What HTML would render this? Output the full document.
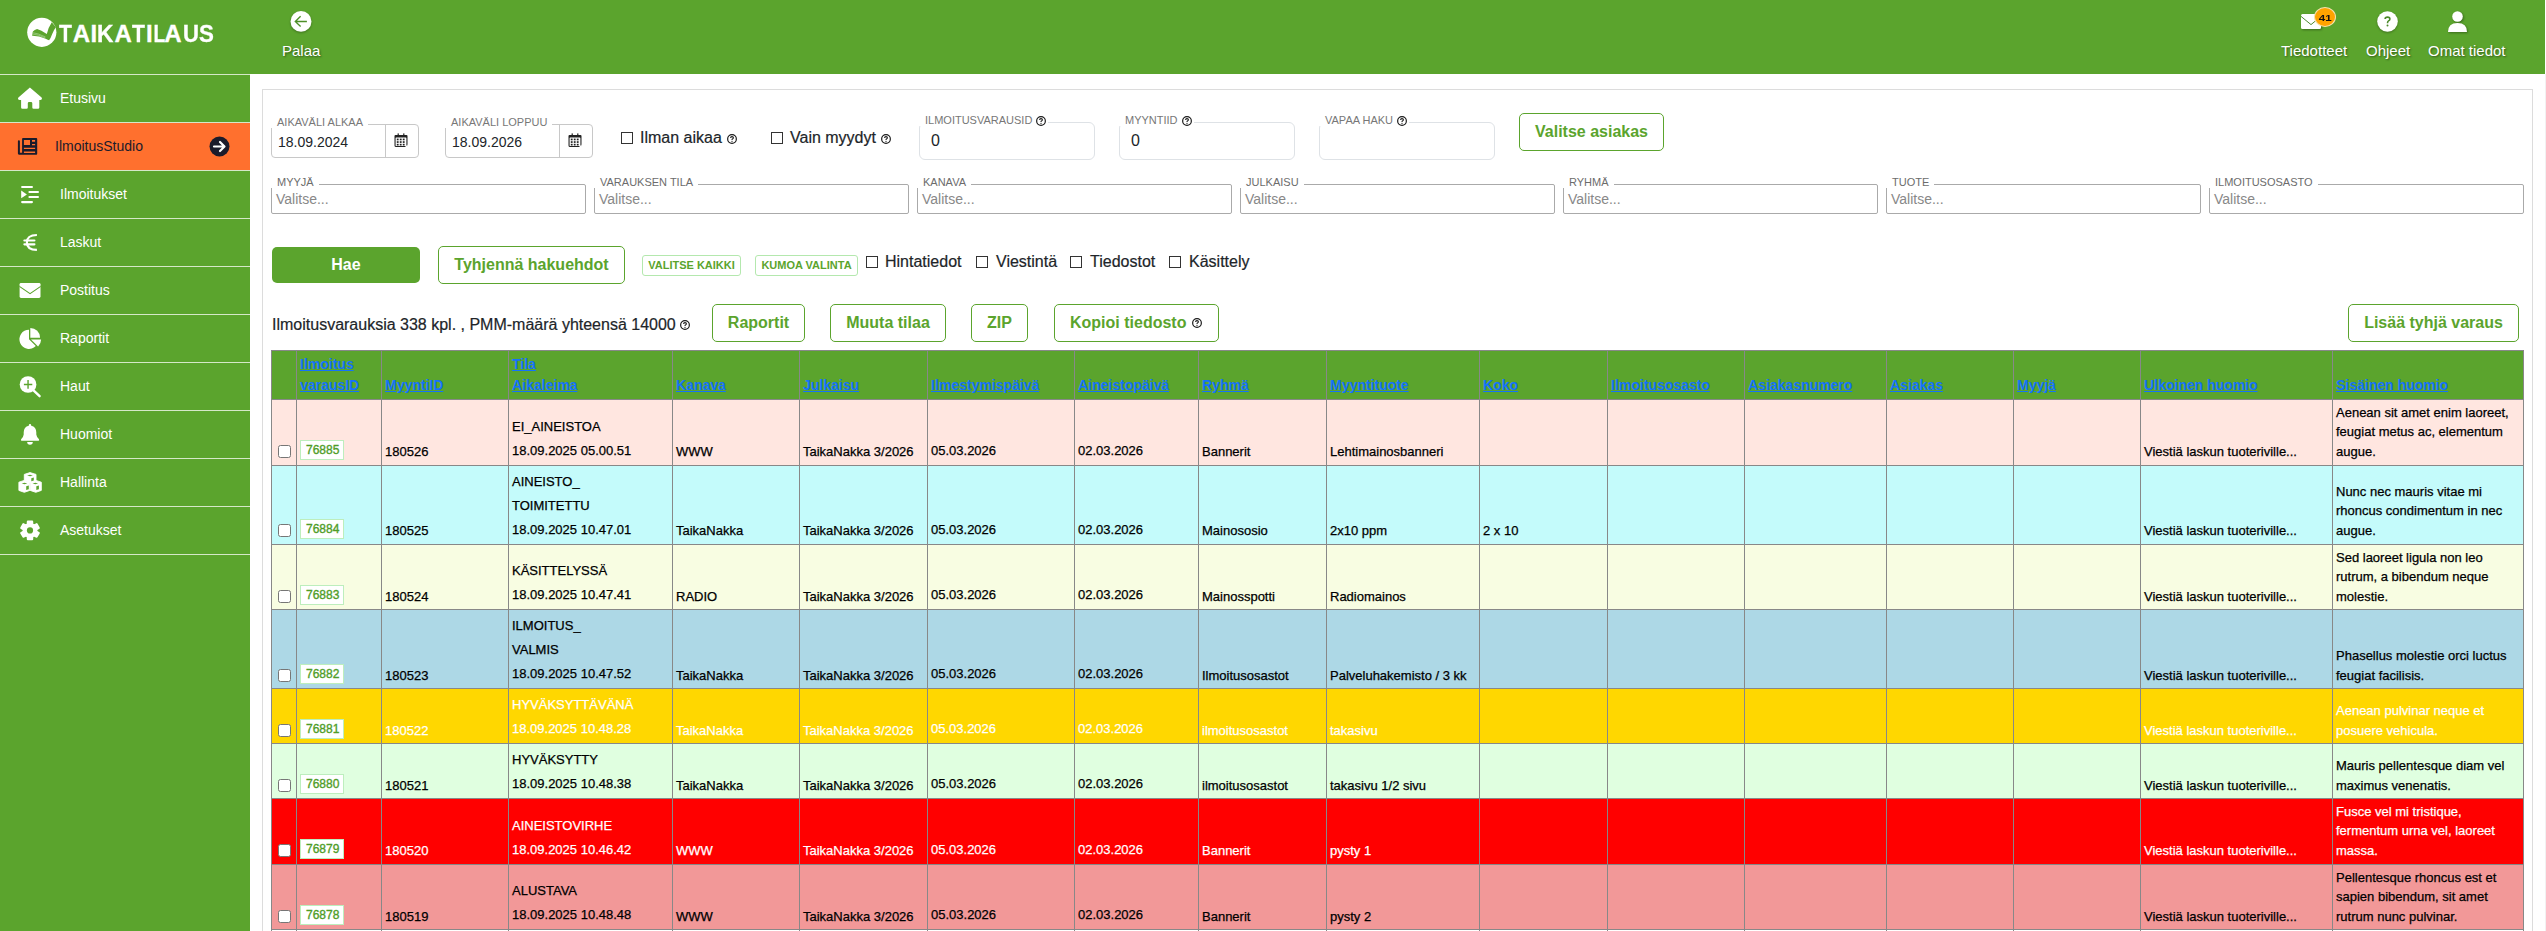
<!DOCTYPE html>
<html><head><meta charset="utf-8">
<style>
*{box-sizing:border-box}
html,body{margin:0;padding:0;width:2546px;height:931px;overflow:hidden;background:#fff;font-family:"Liberation Sans",sans-serif;color:#212529}
.abs{position:absolute}
#hdr{position:absolute;left:0;top:0;width:2545px;height:74px;background:#5ba42d}
.htxt{position:absolute;color:#fff;font-size:15px;line-height:17px;text-shadow:1px 1px 2px rgba(0,0,0,.45);white-space:nowrap}
#side{position:absolute;left:0;top:74px;width:250px;height:857px;background:#5ba42d}
.si{position:absolute;left:0;width:250px;height:48px;border-top:1px solid #d5e8c8}
.si .t{position:absolute;left:60px;top:15px;font-size:14px;line-height:16px;color:#fff;white-space:nowrap}
.si svg{position:absolute}
#panel{position:absolute;left:262px;top:89px;width:2271px;height:900px;border:1px solid #dcdcdc}
.lg{position:absolute;font-size:11px;line-height:12px;color:#777;white-space:nowrap;background:#fff;padding:0 5px 0 6px}
.fs{position:absolute;border:1px solid #c8c8c8;border-radius:4px}
.fs2{position:absolute;border:1px solid #dee2e6;border-radius:6px}
.sel{position:absolute;border:1px solid #aaa;border-radius:2px}
.ph{position:absolute;font-size:14px;color:#888;white-space:nowrap;line-height:16px}
.cb{position:absolute;width:12px;height:12px;border:1px solid #333;background:#fff}
.ct{position:absolute;font-size:16px;line-height:18px;color:#212529;white-space:nowrap;-webkit-text-stroke:0.2px currentColor}
.help{position:absolute;width:10px;height:10px;border:1.3px solid #222;border-radius:50%;font-size:8px;line-height:8px;text-align:center;font-weight:bold;color:#222}
.btn{position:absolute;border:1px solid #5ba42d;border-radius:5px;color:#5ba42d;font-weight:bold;font-size:16px;text-align:center;white-space:nowrap;background:#fff}
.sbtn{position:absolute;border:1px solid #b4e8ae;border-radius:3px;color:#5ba42d;font-weight:bold;font-size:11px;text-align:center;white-space:nowrap;background:#fff}
.th{position:absolute;font-size:14px;line-height:16px;font-weight:bold;color:#1572fb;text-decoration:underline;white-space:nowrap}
.td{position:absolute;font-size:13px;line-height:15px;white-space:nowrap;-webkit-text-stroke:0.25px currentColor}
.tcb{position:absolute;width:13px;height:13px;border:1px solid #767676;border-radius:2.5px;background:#fff}
.badge{position:absolute;width:44px;height:20px;border:1px solid #bdeebd;background:#fff;color:#4f9d28;font-weight:normal;-webkit-text-stroke:0.35px #4f9d28;font-size:12px;line-height:15px;padding:2px 0 0 5px}
</style></head><body>
<div id="hdr">
<svg class="abs" style="left:27px;top:17px" width="30" height="30" viewBox="0 0 30 30"><circle cx="14.8" cy="15.3" r="14.6" fill="#fff"/><path d="M5.9 14.4 Q7.5 12.8 10.1 12.1 Q14 13.3 19.8 17.1 Q21 11 24.8 5.3 L28.9 10.3 Q26.8 13 25.2 17 Q23.8 21 22.1 23.3 Q21 22.8 18.7 21.7 Q12 18.6 5.1 18.7 Z" fill="#5ba42d"/><path d="M5.3 15.6 Q11 16.2 18.5 20 M5.3 17 Q11 17.4 18 20.8" stroke="#b5dca0" stroke-width="0.6" fill="none"/></svg>
<div class="abs" style="left:0;top:20px;font-size:24px;line-height:28px;font-weight:bold;color:#fff;-webkit-text-stroke:0.3px #fff"><span style="position:absolute;left:58.9px;top:0;transform:scaleX(0.88);transform-origin:0px 0">T</span><span style="position:absolute;left:72.8px;top:0">A</span><span style="position:absolute;left:90.4px;top:0">I</span><span style="position:absolute;left:97.3px;top:0;transform:scaleX(0.95);transform-origin:2px 0">K</span><span style="position:absolute;left:114.5px;top:0">A</span><span style="position:absolute;left:132.3px;top:0;transform:scaleX(0.88);transform-origin:0px 0">T</span><span style="position:absolute;left:145.9px;top:0">I</span><span style="position:absolute;left:152.9px;top:0;transform:scaleX(0.8);transform-origin:2px 0">L</span><span style="position:absolute;left:164.3px;top:0">A</span><span style="position:absolute;left:182.8px;top:0;transform:scaleX(0.92);transform-origin:1px 0">U</span><span style="position:absolute;left:198.9px;top:0;transform:scaleX(0.93);transform-origin:1px 0">S</span></div>
<svg class="abs" style="left:290px;top:10px;filter:drop-shadow(0.5px 1px 1px rgba(0,0,0,.3))" width="23" height="24" viewBox="0 0 23 24"><circle cx="11" cy="11.4" r="10.45" fill="#fff"/><path d="M16.9 11.5 H5.4 M10.6 6.2 L5.3 11.5 L10.6 16.6" stroke="#4d8f27" stroke-width="1.35" fill="none"/></svg>
<div class="htxt" style="left:282px;top:42px">Palaa</div>
<svg class="abs" style="left:2300px;top:13px;filter:drop-shadow(1px 1px 1px rgba(0,0,0,.35))" width="22" height="17" viewBox="0 0 22 17">
<rect x="1" y="1" width="20" height="15" rx="1.5" fill="#fff"/>
<path d="M1 3.4 L11 11.6 L21 3.4" stroke="#4f8a30" stroke-width="1" fill="none"/>
</svg>
<div class="abs" style="left:2314px;top:7px;width:22px;height:20px;border-radius:50%;background:#ffa300;border:1px solid #f4e2b0;font-size:9.5px;line-height:20px;font-weight:bold;color:#111;text-align:center"><span style="display:inline-block;transform:scaleX(1.22)">41</span></div>
<div class="htxt" style="left:2281px;top:42px">Tiedotteet</div>
<svg class="abs" style="left:2376px;top:11px;filter:drop-shadow(0.5px 1px 1px rgba(0,0,0,.3))" width="23" height="23" viewBox="0 0 23 23"><circle cx="11.5" cy="10.5" r="10.3" fill="#fff"/><path d="M9.1 8.1 Q9.1 6.1 11.5 6.1 Q13.9 6.1 13.9 7.9 Q13.9 9.1 12.5 9.9 Q11.5 10.5 11.5 12.2" stroke="#4b8a2a" stroke-width="1.6" fill="none"/><circle cx="11.5" cy="14.6" r="1" fill="#4b8a2a"/></svg>
<div class="htxt" style="left:2366px;top:42px">Ohjeet</div>
<svg class="abs" style="left:2447px;top:11px;filter:drop-shadow(1px 1px 1px rgba(0,0,0,.35))" width="21" height="22" viewBox="0 0 21 22">
<circle cx="10.5" cy="5.5" r="5.3" fill="#fff"/>
<path d="M1 21 Q1 12 10.5 12 Q20 12 20 21 Z" fill="#fff"/>
</svg>
<div class="htxt" style="left:2428px;top:42px">Omat tiedot</div>
</div>
<div id="side">
<div class="si" style="top:0px"><svg style="position:absolute;left:14px;top:9px" width="32" height="28" viewBox="0 0 32 28"><path fill="#fff" d="M15.9 3.6 L27.6 13.6 Q28.4 14.5 27.6 15.6 Q27.2 16 26.3 16 H25.3 V23.4 Q25.3 24.7 24 24.7 H19.6 Q18.3 24.7 18.3 23.4 V19.3 Q18.3 18 17 18 H15.1 Q13.8 18 13.8 19.3 V23.4 Q13.8 24.7 12.5 24.7 H8.4 Q7.1 24.7 7.1 23.4 V16 H5.6 Q4.7 16 4.3 15.6 Q3.6 14.5 4.4 13.6 Z"/></svg><div class="t" style="">Etusivu</div></div>
<div class="si" style="top:48px;background:#ff702e"><svg style="position:absolute;left:14px;top:11px" width="28" height="26" viewBox="0 0 28 26"><path fill-rule="evenodd" fill="#1b1b2b" d="M9 4 H22.3 Q23.2 4 23.2 4.9 V19.8 Q23.2 20.7 22.3 20.7 H5 Q3.9 20.7 3.9 19.6 V7.2 Q3.9 6.3 4.9 6.3 Q5.9 6.3 5.9 7.2 V18.8 H8.1 V4.9 Q8.1 4 9 4 Z M9.9 6 H16 V11 H9.9 Z M18 6 H21.1 V7.7 H18 Z M18 9.9 H21.1 V11.2 H18 Z M9.9 13.8 H21.1 V15 H9.9 Z M9.9 17.5 H21.1 V19 H9.9 Z"/></svg><div class="t" style="color:#1b1b2b;left:55px">IlmoitusStudio</div><svg style="position:absolute;left:209px;top:13px" width="21" height="21" viewBox="0 0 21 21"><circle cx="10.5" cy="10.5" r="10" fill="#1b1b2b"/><path d="M5 10.5 H15 M11 6 L15.5 10.5 L11 15" stroke="#fff" stroke-width="2.2" fill="none" stroke-linecap="round" stroke-linejoin="round"/></svg></div>
<div class="si" style="top:96px"><svg style="position:absolute;left:14px;top:9px" width="32" height="28" viewBox="0 0 32 28"><rect x="7.07" y="5.9" width="11.93" height="2.2" rx="1.1" fill="#fff"/><rect x="14.4" y="11" width="10.6" height="2.1" rx="1" fill="#fff"/><rect x="14.4" y="15.9" width="10.6" height="2.1" rx="1" fill="#fff"/><rect x="7.07" y="21" width="11.93" height="2.2" rx="1.1" fill="#fff"/><path d="M7.2 10.5 L12.9 14.4 L7.2 18.3 Z" fill="#fff"/></svg><div class="t" style="">Ilmoitukset</div></div>
<div class="si" style="top:144px"><svg style="position:absolute;left:14px;top:9px" width="32" height="28" viewBox="0 0 32 28"><path d="M22.9 7.0 C16.8 7.0 12.9 9.5 12.9 14.45 C12.9 19.4 16.8 21.9 22.9 21.9" stroke="#fff" stroke-width="2.15" fill="none"/><rect x="9.3" y="11.4" width="12.2" height="2.1" rx="1.05" fill="#fff"/><rect x="9.3" y="15.3" width="12.2" height="2.1" rx="1.05" fill="#fff"/></svg><div class="t" style="">Laskut</div></div>
<div class="si" style="top:192px"><svg style="position:absolute;left:14px;top:9px" width="32" height="28" viewBox="0 0 32 28"><rect x="5.6" y="6.9" width="20.9" height="15.1" rx="1.4" fill="#fff"/><path d="M5.4 10.4 L16.05 17.6 L26.7 10.4" stroke="#5ba42d" stroke-width="1.1" fill="none"/></svg><div class="t" style="">Postitus</div></div>
<div class="si" style="top:240px"><svg style="position:absolute;left:14px;top:9px" width="32" height="28" viewBox="0 0 32 28"><path d="M15 15.3 V5.7 A9.6 9.6 0 1 0 21.8 22.1 Z" fill="#fff"/><path d="M16.3 13.8 V4.0 A9.8 9.8 0 0 1 26.1 13.8 Z" fill="#fff"/><path d="M17 15.5 H27.1 A10.1 10.1 0 0 1 24.1 22.6 Z" fill="#fff"/></svg><div class="t" style="">Raportit</div></div>
<div class="si" style="top:288px"><svg style="position:absolute;left:14px;top:9px" width="32" height="28" viewBox="0 0 32 28"><path d="M19.5 18.3 L25.6 24.2" stroke="#fff" stroke-width="2.4" stroke-linecap="round"/><circle cx="14.05" cy="12.5" r="8.35" fill="#fff"/><path d="M9.9 12.5 H18.3 M14.05 8.1 V16.8" stroke="#5ba42d" stroke-width="1.4"/></svg><div class="t" style="">Haut</div></div>
<div class="si" style="top:336px"><svg style="position:absolute;left:14px;top:9px" width="32" height="28" viewBox="0 0 32 28"><path fill="#fff" d="M16 3.9 Q17.2 3.9 17.2 5.2 V5.8 Q22.3 7 22.3 12.5 V14.5 Q22.6 17 25 19.2 Q25.6 20.75 24.3 20.75 H7.9 Q6.5 20.75 7.1 19.2 Q9.5 17 9.7 14.5 V12.5 Q9.7 7 14.8 5.8 V5.2 Q14.8 3.9 16 3.9 Z"/><path fill="#fff" d="M13.2 22.1 H18.8 Q18.8 24.8 16 24.8 Q13.2 24.8 13.2 22.1 Z"/></svg><div class="t" style="">Huomiot</div></div>
<div class="si" style="top:384px"><svg style="position:absolute;left:14px;top:9px" width="32" height="28" viewBox="0 0 32 28"><g fill="#fff" stroke="#fff" stroke-width="0.9" stroke-linejoin="round"><path d="M16 4.6 L22 6.4 V12.4 L16 14.4 L10.3 12.4 V6.4 Z"/><path d="M10.3 12.4 L15.8 14.2 V22.4 L10.3 24.3 L4.9 22.4 V14.2 Z"/><path d="M21.8 12.4 L27.3 14.2 V22.4 L21.8 24.3 L16.2 22.4 V14.2 Z"/></g><g fill="#5ba42d"><path d="M13.1 7.5 L16 6.7 L18.9 7.5 L16 8.3 Z"/><path d="M17.3 10.3 L19.8 9.6 V12.6 L17.3 13.3 Z"/><path d="M7.7 15.5 L10.5 14.7 L13.3 15.5 L10.5 16.3 Z"/><path d="M12.2 18.2 L14.8 17.5 V21.2 L12.2 21.9 Z"/><path d="M18.5 15.5 L21.3 14.7 L24.1 15.5 L21.3 16.3 Z"/><path d="M22.3 18.2 L24.9 17.5 V21.2 L22.3 21.9 Z"/></g></svg><div class="t" style="">Hallinta</div></div>
<div class="si" style="top:432px"><svg style="position:absolute;left:14px;top:9px" width="32" height="28" viewBox="0 0 32 28"><path d="M13.53 8.33 L13.75 5.43 L18.25 5.43 L18.47 8.33 L20.06 9.25 L22.69 7.99 L24.94 11.89 L22.54 13.53 L22.54 15.37 L24.94 17.01 L22.69 20.91 L20.06 19.65 L18.47 20.57 L18.25 23.47 L13.75 23.47 L13.53 20.57 L11.94 19.65 L9.31 20.91 L7.06 17.01 L9.46 15.37 L9.46 13.53 L7.06 11.89 L9.31 7.99 L11.94 9.25 Z" fill="#fff" stroke="#fff" stroke-width="1.8" stroke-linejoin="round"/><circle cx="16" cy="14.45" r="3.1" fill="#5ba42d"/></svg><div class="t" style="">Asetukset</div></div>
<div class="si" style="top:480px;height:1px"></div>
</div>
<div id="panel"></div>
<div class="fs" style="left:271px;top:124px;width:148px;height:34px"></div>
<div class="abs" style="left:385px;top:125px;width:1px;height:32px;background:#c8c8c8"></div>
<div class="lg" style="left:271px;top:116px">AIKAVÄLI ALKAA</div>
<div class="abs" style="left:278px;top:134px;font-size:14px;line-height:16px;color:#212529">18.09.2024</div>
<svg class="abs" style="left:394px;top:133px" width="14" height="15" viewBox="0 0 14 15"><path d="M1.5 2 H12.5 Q13.5 2 13.5 3 V12 Q13.5 14 11.5 14 H2 Q0.5 14 0.5 12.5 V3 Q0.5 2 1.5 2 Z" fill="#222"/><rect x="1.6" y="4.6" width="10.8" height="8.3" rx="0.5" fill="#fff"/><path d="M11 14 L13.5 11.5 V14 Z" fill="#fff"/><rect x="3.6" y="0.4" width="1.2" height="2.6" fill="#222"/><rect x="9.2" y="0.4" width="1.2" height="2.6" fill="#222"/><rect x="2.8" y="5.6" width="1.8" height="1.7" fill="#222"/><rect x="2.8" y="8.2" width="1.8" height="1.7" fill="#222"/><rect x="2.8" y="10.8" width="1.8" height="1.7" fill="#222"/><rect x="5.8" y="5.6" width="1.8" height="1.7" fill="#222"/><rect x="5.8" y="8.2" width="1.8" height="1.7" fill="#222"/><rect x="5.8" y="10.8" width="1.8" height="1.7" fill="#222"/><rect x="8.8" y="5.6" width="1.8" height="1.7" fill="#222"/><rect x="8.8" y="8.2" width="1.8" height="1.7" fill="#222"/><rect x="8.8" y="10.8" width="1.8" height="1.7" fill="#222"/></svg>
<div class="fs" style="left:445px;top:124px;width:148px;height:34px"></div>
<div class="abs" style="left:559px;top:125px;width:1px;height:32px;background:#c8c8c8"></div>
<div class="lg" style="left:445px;top:116px">AIKAVÄLI LOPPUU</div>
<div class="abs" style="left:452px;top:134px;font-size:14px;line-height:16px;color:#212529">18.09.2026</div>
<svg class="abs" style="left:568px;top:133px" width="14" height="15" viewBox="0 0 14 15"><path d="M1.5 2 H12.5 Q13.5 2 13.5 3 V12 Q13.5 14 11.5 14 H2 Q0.5 14 0.5 12.5 V3 Q0.5 2 1.5 2 Z" fill="#222"/><rect x="1.6" y="4.6" width="10.8" height="8.3" rx="0.5" fill="#fff"/><path d="M11 14 L13.5 11.5 V14 Z" fill="#fff"/><rect x="3.6" y="0.4" width="1.2" height="2.6" fill="#222"/><rect x="9.2" y="0.4" width="1.2" height="2.6" fill="#222"/><rect x="2.8" y="5.6" width="1.8" height="1.7" fill="#222"/><rect x="2.8" y="8.2" width="1.8" height="1.7" fill="#222"/><rect x="2.8" y="10.8" width="1.8" height="1.7" fill="#222"/><rect x="5.8" y="5.6" width="1.8" height="1.7" fill="#222"/><rect x="5.8" y="8.2" width="1.8" height="1.7" fill="#222"/><rect x="5.8" y="10.8" width="1.8" height="1.7" fill="#222"/><rect x="8.8" y="5.6" width="1.8" height="1.7" fill="#222"/><rect x="8.8" y="8.2" width="1.8" height="1.7" fill="#222"/><rect x="8.8" y="10.8" width="1.8" height="1.7" fill="#222"/></svg>
<div class="cb" style="left:621px;top:132px"></div><div class="ct" style="left:640px;top:129px">Ilman aikaa</div><svg class="abs" style="left:727px;top:134px" width="10" height="10" viewBox="0 0 10 10"><circle cx="5" cy="5" r="4.35" stroke="#1a1a1a" stroke-width="1.2" fill="none"/><path d="M3.6 4 Q3.6 2.6 5 2.6 Q6.4 2.6 6.4 3.8 Q6.4 4.6 5.4 5 Q5 5.2 5 5.9" stroke="#1a1a1a" stroke-width="1.1" fill="none"/><circle cx="5" cy="7.3" r="0.65" fill="#1a1a1a"/></svg>
<div class="cb" style="left:771px;top:132px"></div><div class="ct" style="left:790px;top:129px">Vain myydyt</div><svg class="abs" style="left:881px;top:134px" width="10" height="10" viewBox="0 0 10 10"><circle cx="5" cy="5" r="4.35" stroke="#1a1a1a" stroke-width="1.2" fill="none"/><path d="M3.6 4 Q3.6 2.6 5 2.6 Q6.4 2.6 6.4 3.8 Q6.4 4.6 5.4 5 Q5 5.2 5 5.9" stroke="#1a1a1a" stroke-width="1.1" fill="none"/><circle cx="5" cy="7.3" r="0.65" fill="#1a1a1a"/></svg>
<div class="fs2" style="left:919px;top:122px;width:176px;height:38px"></div>
<div class="lg" style="left:919px;top:114px;padding-right:16px">ILMOITUSVARAUSID</div>
<svg class="abs" style="left:1036px;top:116px" width="10" height="10" viewBox="0 0 10 10"><circle cx="5" cy="5" r="4.35" stroke="#1a1a1a" stroke-width="1.2" fill="none"/><path d="M3.6 4 Q3.6 2.6 5 2.6 Q6.4 2.6 6.4 3.8 Q6.4 4.6 5.4 5 Q5 5.2 5 5.9" stroke="#1a1a1a" stroke-width="1.1" fill="none"/><circle cx="5" cy="7.3" r="0.65" fill="#1a1a1a"/></svg>
<div class="abs" style="left:931px;top:132px;font-size:16px;line-height:18px;color:#212529">0</div>
<div class="fs2" style="left:1119px;top:122px;width:176px;height:38px"></div>
<div class="lg" style="left:1119px;top:114px;padding-right:16px">MYYNTIID</div>
<svg class="abs" style="left:1182px;top:116px" width="10" height="10" viewBox="0 0 10 10"><circle cx="5" cy="5" r="4.35" stroke="#1a1a1a" stroke-width="1.2" fill="none"/><path d="M3.6 4 Q3.6 2.6 5 2.6 Q6.4 2.6 6.4 3.8 Q6.4 4.6 5.4 5 Q5 5.2 5 5.9" stroke="#1a1a1a" stroke-width="1.1" fill="none"/><circle cx="5" cy="7.3" r="0.65" fill="#1a1a1a"/></svg>
<div class="abs" style="left:1131px;top:132px;font-size:16px;line-height:18px;color:#212529">0</div>
<div class="fs2" style="left:1319px;top:122px;width:176px;height:38px"></div>
<div class="lg" style="left:1319px;top:114px;padding-right:16px">VAPAA HAKU</div>
<svg class="abs" style="left:1397px;top:116px" width="10" height="10" viewBox="0 0 10 10"><circle cx="5" cy="5" r="4.35" stroke="#1a1a1a" stroke-width="1.2" fill="none"/><path d="M3.6 4 Q3.6 2.6 5 2.6 Q6.4 2.6 6.4 3.8 Q6.4 4.6 5.4 5 Q5 5.2 5 5.9" stroke="#1a1a1a" stroke-width="1.1" fill="none"/><circle cx="5" cy="7.3" r="0.65" fill="#1a1a1a"/></svg>
<div class="btn" style="left:1519px;top:113px;width:145px;height:38px;line-height:36px">Valitse asiakas</div>
<div class="sel" style="left:271px;top:184px;width:315px;height:30px"></div>
<div class="lg" style="left:271px;top:176px;color:#6c6c6c">MYYJÄ</div>
<div class="ph" style="top:191px;left:276px">Valitse...</div>
<div class="sel" style="left:594px;top:184px;width:315px;height:30px"></div>
<div class="lg" style="left:594px;top:176px;color:#6c6c6c">VARAUKSEN TILA</div>
<div class="ph" style="top:191px;left:599px">Valitse...</div>
<div class="sel" style="left:917px;top:184px;width:315px;height:30px"></div>
<div class="lg" style="left:917px;top:176px;color:#6c6c6c">KANAVA</div>
<div class="ph" style="top:191px;left:922px">Valitse...</div>
<div class="sel" style="left:1240px;top:184px;width:315px;height:30px"></div>
<div class="lg" style="left:1240px;top:176px;color:#6c6c6c">JULKAISU</div>
<div class="ph" style="top:191px;left:1245px">Valitse...</div>
<div class="sel" style="left:1563px;top:184px;width:315px;height:30px"></div>
<div class="lg" style="left:1563px;top:176px;color:#6c6c6c">RYHMÄ</div>
<div class="ph" style="top:191px;left:1568px">Valitse...</div>
<div class="sel" style="left:1886px;top:184px;width:315px;height:30px"></div>
<div class="lg" style="left:1886px;top:176px;color:#6c6c6c">TUOTE</div>
<div class="ph" style="top:191px;left:1891px">Valitse...</div>
<div class="sel" style="left:2209px;top:184px;width:315px;height:30px"></div>
<div class="lg" style="left:2209px;top:176px;color:#6c6c6c">ILMOITUSOSASTO</div>
<div class="ph" style="top:191px;left:2214px">Valitse...</div>
<div class="abs" style="left:272px;top:247px;width:148px;height:36px;background:#5ba42d;border-radius:5px;color:#fff;font-weight:bold;font-size:16px;line-height:36px;text-align:center">Hae</div>
<div class="btn" style="left:438px;top:246px;width:187px;height:38px;line-height:36px">Tyhjennä hakuehdot</div>
<div class="sbtn" style="left:642px;top:255px;width:99px;height:21px;line-height:19px">VALITSE KAIKKI</div>
<div class="sbtn" style="left:755px;top:255px;width:103px;height:21px;line-height:19px">KUMOA VALINTA</div>
<div class="cb" style="left:866px;top:256px"></div><div class="ct" style="left:885px;top:253px">Hintatiedot</div>
<div class="cb" style="left:976px;top:256px"></div><div class="ct" style="left:996px;top:253px">Viestintä</div>
<div class="cb" style="left:1070px;top:256px"></div><div class="ct" style="left:1090px;top:253px">Tiedostot</div>
<div class="cb" style="left:1169px;top:256px"></div><div class="ct" style="left:1189px;top:253px">Käsittely</div>
<div class="ct" style="left:272px;top:316px">Ilmoitusvarauksia 338 kpl. , PMM-määrä yhteensä 14000</div><svg class="abs" style="left:680px;top:320px" width="10" height="10" viewBox="0 0 10 10"><circle cx="5" cy="5" r="4.35" stroke="#1a1a1a" stroke-width="1.2" fill="none"/><path d="M3.6 4 Q3.6 2.6 5 2.6 Q6.4 2.6 6.4 3.8 Q6.4 4.6 5.4 5 Q5 5.2 5 5.9" stroke="#1a1a1a" stroke-width="1.1" fill="none"/><circle cx="5" cy="7.3" r="0.65" fill="#1a1a1a"/></svg>
<div class="btn" style="left:712px;top:304px;width:93px;height:38px;line-height:36px">Raportit</div>
<div class="btn" style="left:830px;top:304px;width:116px;height:38px;line-height:36px">Muuta tilaa</div>
<div class="btn" style="left:971px;top:304px;width:57px;height:38px;line-height:36px">ZIP</div>
<div class="btn" style="left:1054px;top:304px;width:165px;height:38px;line-height:36px;text-align:left;padding-left:15px">Kopioi tiedosto</div><svg class="abs" style="left:1192px;top:318px" width="10" height="10" viewBox="0 0 10 10"><circle cx="5" cy="5" r="4.35" stroke="#1a1a1a" stroke-width="1.2" fill="none"/><path d="M3.6 4 Q3.6 2.6 5 2.6 Q6.4 2.6 6.4 3.8 Q6.4 4.6 5.4 5 Q5 5.2 5 5.9" stroke="#1a1a1a" stroke-width="1.1" fill="none"/><circle cx="5" cy="7.3" r="0.65" fill="#1a1a1a"/></svg>
<div class="btn" style="left:2348px;top:304px;width:171px;height:38px;line-height:36px">Lisää tyhjä varaus</div>
<!--TABLE-->
<div class="abs" style="left:271px;top:350px;width:2253px;height:49px;background:#5ba42d"></div>
<div class="abs" style="left:271px;top:399px;width:2253px;height:66px;background:#ffe6e0"></div>
<div class="abs" style="left:271px;top:465px;width:2253px;height:79px;background:#c4fbfb"></div>
<div class="abs" style="left:271px;top:544px;width:2253px;height:65px;background:#f8fde2"></div>
<div class="abs" style="left:271px;top:609px;width:2253px;height:79px;background:#add8e6"></div>
<div class="abs" style="left:271px;top:688px;width:2253px;height:55px;background:#ffd700"></div>
<div class="abs" style="left:271px;top:743px;width:2253px;height:55px;background:#e0ffe0"></div>
<div class="abs" style="left:271px;top:798px;width:2253px;height:66px;background:#ff0000"></div>
<div class="abs" style="left:271px;top:864px;width:2253px;height:65px;background:#f29898"></div>
<div class="abs" style="left:271px;top:350px;width:2253px;height:1px;background:#888"></div>
<div class="abs" style="left:271px;top:399px;width:2253px;height:1px;background:#888"></div>
<div class="abs" style="left:271px;top:465px;width:2253px;height:1px;background:#888"></div>
<div class="abs" style="left:271px;top:544px;width:2253px;height:1px;background:#888"></div>
<div class="abs" style="left:271px;top:609px;width:2253px;height:1px;background:#888"></div>
<div class="abs" style="left:271px;top:688px;width:2253px;height:1px;background:#888"></div>
<div class="abs" style="left:271px;top:743px;width:2253px;height:1px;background:#888"></div>
<div class="abs" style="left:271px;top:798px;width:2253px;height:1px;background:#888"></div>
<div class="abs" style="left:271px;top:864px;width:2253px;height:1px;background:#888"></div>
<div class="abs" style="left:271px;top:929px;width:2253px;height:1px;background:#888"></div>
<div class="abs" style="left:271px;top:350px;width:1px;height:581px;background:#888"></div>
<div class="abs" style="left:296px;top:350px;width:1px;height:581px;background:#888"></div>
<div class="abs" style="left:381px;top:350px;width:1px;height:581px;background:#888"></div>
<div class="abs" style="left:508px;top:350px;width:1px;height:581px;background:#888"></div>
<div class="abs" style="left:672px;top:350px;width:1px;height:581px;background:#888"></div>
<div class="abs" style="left:799px;top:350px;width:1px;height:581px;background:#888"></div>
<div class="abs" style="left:927px;top:350px;width:1px;height:581px;background:#888"></div>
<div class="abs" style="left:1074px;top:350px;width:1px;height:581px;background:#888"></div>
<div class="abs" style="left:1198px;top:350px;width:1px;height:581px;background:#888"></div>
<div class="abs" style="left:1326px;top:350px;width:1px;height:581px;background:#888"></div>
<div class="abs" style="left:1479px;top:350px;width:1px;height:581px;background:#888"></div>
<div class="abs" style="left:1607px;top:350px;width:1px;height:581px;background:#888"></div>
<div class="abs" style="left:1744px;top:350px;width:1px;height:581px;background:#888"></div>
<div class="abs" style="left:1886px;top:350px;width:1px;height:581px;background:#888"></div>
<div class="abs" style="left:2013px;top:350px;width:1px;height:581px;background:#888"></div>
<div class="abs" style="left:2140px;top:350px;width:1px;height:581px;background:#888"></div>
<div class="abs" style="left:2332px;top:350px;width:1px;height:581px;background:#888"></div>
<div class="abs" style="left:2523px;top:350px;width:1px;height:581px;background:#888"></div>
<div class="th" style="left:300px;top:377px">varausID</div>
<div class="th" style="left:300px;top:356px">Ilmoitus</div>
<div class="th" style="left:385px;top:377px">MyyntiID</div>
<div class="th" style="left:512px;top:377px">Aikaleima</div>
<div class="th" style="left:512px;top:356px">Tila</div>
<div class="th" style="left:676px;top:377px">Kanava</div>
<div class="th" style="left:803px;top:377px">Julkaisu</div>
<div class="th" style="left:931px;top:377px">Ilmestymispäivä</div>
<div class="th" style="left:1078px;top:377px">Aineistopäivä</div>
<div class="th" style="left:1202px;top:377px">Ryhmä</div>
<div class="th" style="left:1330px;top:377px">Myyntituote</div>
<div class="th" style="left:1483px;top:377px">Koko</div>
<div class="th" style="left:1611px;top:377px">Ilmoitusosasto</div>
<div class="th" style="left:1748px;top:377px">Asiakasnumero</div>
<div class="th" style="left:1890px;top:377px">Asiakas</div>
<div class="th" style="left:2017px;top:377px">Myyjä</div>
<div class="th" style="left:2144px;top:377px">Ulkoinen huomio</div>
<div class="th" style="left:2336px;top:377px">Sisäinen huomio</div>
<div class="tcb" style="left:278px;top:445px"></div>
<div class="badge" style="left:300px;top:440px">76885</div>
<div class="td" style="left:385px;top:444px;color:#000">180526</div>
<div class="td" style="left:512px;top:443px;color:#000">18.09.2025 05.00.51</div>
<div class="td" style="left:512px;top:419px;color:#000">EI_AINEISTOA</div>
<div class="td" style="left:676px;top:444px;color:#000">WWW</div>
<div class="td" style="left:803px;top:444px;color:#000">TaikaNakka 3/2026</div>
<div class="td" style="left:931px;top:443px;color:#000">05.03.2026</div>
<div class="td" style="left:1078px;top:443px;color:#000">02.03.2026</div>
<div class="td" style="left:1202px;top:444px;color:#000">Bannerit</div>
<div class="td" style="left:1330px;top:444px;color:#000">Lehtimainosbanneri</div>
<div class="td" style="left:2144px;top:444px;color:#000">Viestiä laskun tuoteriville...</div>
<div class="td" style="left:2336px;top:444px;color:#000">augue.</div>
<div class="td" style="left:2336px;top:424px;color:#000">feugiat metus ac, elementum</div>
<div class="td" style="left:2336px;top:405px;color:#000">Aenean sit amet enim laoreet,</div>
<div class="tcb" style="left:278px;top:524px"></div>
<div class="badge" style="left:300px;top:519px">76884</div>
<div class="td" style="left:385px;top:523px;color:#000">180525</div>
<div class="td" style="left:512px;top:522px;color:#000">18.09.2025 10.47.01</div>
<div class="td" style="left:512px;top:498px;color:#000">TOIMITETTU</div>
<div class="td" style="left:512px;top:474px;color:#000">AINEISTO_</div>
<div class="td" style="left:676px;top:523px;color:#000">TaikaNakka</div>
<div class="td" style="left:803px;top:523px;color:#000">TaikaNakka 3/2026</div>
<div class="td" style="left:931px;top:522px;color:#000">05.03.2026</div>
<div class="td" style="left:1078px;top:522px;color:#000">02.03.2026</div>
<div class="td" style="left:1202px;top:523px;color:#000">Mainososio</div>
<div class="td" style="left:1330px;top:523px;color:#000">2x10 ppm</div>
<div class="td" style="left:1483px;top:523px;color:#000">2 x 10</div>
<div class="td" style="left:2144px;top:523px;color:#000">Viestiä laskun tuoteriville...</div>
<div class="td" style="left:2336px;top:523px;color:#000">augue.</div>
<div class="td" style="left:2336px;top:503px;color:#000">rhoncus condimentum in nec</div>
<div class="td" style="left:2336px;top:484px;color:#000">Nunc nec mauris vitae mi</div>
<div class="tcb" style="left:278px;top:590px"></div>
<div class="badge" style="left:300px;top:585px">76883</div>
<div class="td" style="left:385px;top:589px;color:#000">180524</div>
<div class="td" style="left:512px;top:587px;color:#000">18.09.2025 10.47.41</div>
<div class="td" style="left:512px;top:563px;color:#000">KÄSITTELYSSÄ</div>
<div class="td" style="left:676px;top:589px;color:#000">RADIO</div>
<div class="td" style="left:803px;top:589px;color:#000">TaikaNakka 3/2026</div>
<div class="td" style="left:931px;top:587px;color:#000">05.03.2026</div>
<div class="td" style="left:1078px;top:587px;color:#000">02.03.2026</div>
<div class="td" style="left:1202px;top:589px;color:#000">Mainosspotti</div>
<div class="td" style="left:1330px;top:589px;color:#000">Radiomainos</div>
<div class="td" style="left:2144px;top:589px;color:#000">Viestiä laskun tuoteriville...</div>
<div class="td" style="left:2336px;top:589px;color:#000">molestie.</div>
<div class="td" style="left:2336px;top:569px;color:#000">rutrum, a bibendum neque</div>
<div class="td" style="left:2336px;top:550px;color:#000">Sed laoreet ligula non leo</div>
<div class="tcb" style="left:278px;top:669px"></div>
<div class="badge" style="left:300px;top:664px">76882</div>
<div class="td" style="left:385px;top:668px;color:#000">180523</div>
<div class="td" style="left:512px;top:666px;color:#000">18.09.2025 10.47.52</div>
<div class="td" style="left:512px;top:642px;color:#000">VALMIS</div>
<div class="td" style="left:512px;top:618px;color:#000">ILMOITUS_</div>
<div class="td" style="left:676px;top:668px;color:#000">TaikaNakka</div>
<div class="td" style="left:803px;top:668px;color:#000">TaikaNakka 3/2026</div>
<div class="td" style="left:931px;top:666px;color:#000">05.03.2026</div>
<div class="td" style="left:1078px;top:666px;color:#000">02.03.2026</div>
<div class="td" style="left:1202px;top:668px;color:#000">Ilmoitusosastot</div>
<div class="td" style="left:1330px;top:668px;color:#000">Palveluhakemisto / 3 kk</div>
<div class="td" style="left:2144px;top:668px;color:#000">Viestiä laskun tuoteriville...</div>
<div class="td" style="left:2336px;top:668px;color:#000">feugiat facilisis.</div>
<div class="td" style="left:2336px;top:648px;color:#000">Phasellus molestie orci luctus</div>
<div class="tcb" style="left:278px;top:724px"></div>
<div class="badge" style="left:300px;top:719px">76881</div>
<div class="td" style="left:385px;top:723px;color:#fff">180522</div>
<div class="td" style="left:512px;top:721px;color:#fff">18.09.2025 10.48.28</div>
<div class="td" style="left:512px;top:697px;color:#fff">HYVÄKSYTTÄVÄNÄ</div>
<div class="td" style="left:676px;top:723px;color:#fff">TaikaNakka</div>
<div class="td" style="left:803px;top:723px;color:#fff">TaikaNakka 3/2026</div>
<div class="td" style="left:931px;top:721px;color:#fff">05.03.2026</div>
<div class="td" style="left:1078px;top:721px;color:#fff">02.03.2026</div>
<div class="td" style="left:1202px;top:723px;color:#fff">ilmoitusosastot</div>
<div class="td" style="left:1330px;top:723px;color:#fff">takasivu</div>
<div class="td" style="left:2144px;top:723px;color:#fff">Viestiä laskun tuoteriville...</div>
<div class="td" style="left:2336px;top:723px;color:#fff">posuere vehicula.</div>
<div class="td" style="left:2336px;top:703px;color:#fff">Aenean pulvinar neque et</div>
<div class="tcb" style="left:278px;top:779px"></div>
<div class="badge" style="left:300px;top:774px">76880</div>
<div class="td" style="left:385px;top:778px;color:#000">180521</div>
<div class="td" style="left:512px;top:776px;color:#000">18.09.2025 10.48.38</div>
<div class="td" style="left:512px;top:752px;color:#000">HYVÄKSYTTY</div>
<div class="td" style="left:676px;top:778px;color:#000">TaikaNakka</div>
<div class="td" style="left:803px;top:778px;color:#000">TaikaNakka 3/2026</div>
<div class="td" style="left:931px;top:776px;color:#000">05.03.2026</div>
<div class="td" style="left:1078px;top:776px;color:#000">02.03.2026</div>
<div class="td" style="left:1202px;top:778px;color:#000">ilmoitusosastot</div>
<div class="td" style="left:1330px;top:778px;color:#000">takasivu 1/2 sivu</div>
<div class="td" style="left:2144px;top:778px;color:#000">Viestiä laskun tuoteriville...</div>
<div class="td" style="left:2336px;top:778px;color:#000">maximus venenatis.</div>
<div class="td" style="left:2336px;top:758px;color:#000">Mauris pellentesque diam vel</div>
<div class="tcb" style="left:278px;top:844px"></div>
<div class="badge" style="left:300px;top:839px">76879</div>
<div class="td" style="left:385px;top:843px;color:#fff">180520</div>
<div class="td" style="left:512px;top:842px;color:#fff">18.09.2025 10.46.42</div>
<div class="td" style="left:512px;top:818px;color:#fff">AINEISTOVIRHE</div>
<div class="td" style="left:676px;top:843px;color:#fff">WWW</div>
<div class="td" style="left:803px;top:843px;color:#fff">TaikaNakka 3/2026</div>
<div class="td" style="left:931px;top:842px;color:#fff">05.03.2026</div>
<div class="td" style="left:1078px;top:842px;color:#fff">02.03.2026</div>
<div class="td" style="left:1202px;top:843px;color:#fff">Bannerit</div>
<div class="td" style="left:1330px;top:843px;color:#fff">pysty 1</div>
<div class="td" style="left:2144px;top:843px;color:#fff">Viestiä laskun tuoteriville...</div>
<div class="td" style="left:2336px;top:843px;color:#fff">massa.</div>
<div class="td" style="left:2336px;top:823px;color:#fff">fermentum urna vel, laoreet</div>
<div class="td" style="left:2336px;top:804px;color:#fff">Fusce vel mi tristique,</div>
<div class="tcb" style="left:278px;top:910px"></div>
<div class="badge" style="left:300px;top:905px">76878</div>
<div class="td" style="left:385px;top:909px;color:#000">180519</div>
<div class="td" style="left:512px;top:907px;color:#000">18.09.2025 10.48.48</div>
<div class="td" style="left:512px;top:883px;color:#000">ALUSTAVA</div>
<div class="td" style="left:676px;top:909px;color:#000">WWW</div>
<div class="td" style="left:803px;top:909px;color:#000">TaikaNakka 3/2026</div>
<div class="td" style="left:931px;top:907px;color:#000">05.03.2026</div>
<div class="td" style="left:1078px;top:907px;color:#000">02.03.2026</div>
<div class="td" style="left:1202px;top:909px;color:#000">Bannerit</div>
<div class="td" style="left:1330px;top:909px;color:#000">pysty 2</div>
<div class="td" style="left:2144px;top:909px;color:#000">Viestiä laskun tuoteriville...</div>
<div class="td" style="left:2336px;top:909px;color:#000">rutrum nunc pulvinar.</div>
<div class="td" style="left:2336px;top:889px;color:#000">sapien bibendum, sit amet</div>
<div class="td" style="left:2336px;top:870px;color:#000">Pellentesque rhoncus est et</div>
<!--/TABLE-->
<div class="abs" style="left:2545px;top:74px;width:1px;height:857px;background:#f2f2f2"></div>
</body></html>
